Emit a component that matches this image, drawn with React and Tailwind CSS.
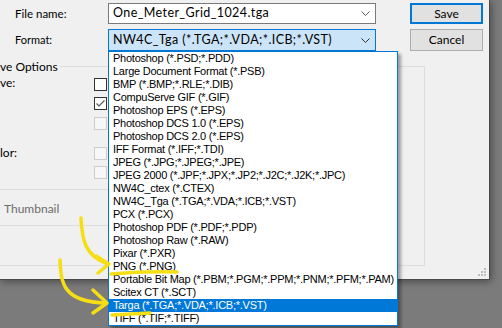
import React from 'react'

const formats = [
  'Photoshop (*.PSD;*.PDD)',
  'Large Document Format (*.PSB)',
  'BMP (*.BMP;*.RLE;*.DIB)',
  'CompuServe GIF (*.GIF)',
  'Photoshop EPS (*.EPS)',
  'Photoshop DCS 1.0 (*.EPS)',
  'Photoshop DCS 2.0 (*.EPS)',
  'IFF Format (*.IFF;*.TDI)',
  'JPEG (*.JPG;*.JPEG;*.JPE)',
  'JPEG 2000 (*.JPF;*.JPX;*.JP2;*.J2C;*.J2K;*.JPC)',
  'NW4C_ctex (*.CTEX)',
  'NW4C_Tga (*.TGA;*.VDA;*.ICB;*.VST)',
  'PCX (*.PCX)',
  'Photoshop PDF (*.PDF;*.PDP)',
  'Photoshop Raw (*.RAW)',
  'Pixar (*.PXR)',
  'PNG (*.PNG)',
  'Portable Bit Map (*.PBM;*.PGM;*.PPM;*.PNM;*.PFM;*.PAM)',
  'Scitex CT (*.SCT)',
  'Targa (*.TGA;*.VDA;*.ICB;*.VST)',
  'TIFF (*.TIF;*.TIFF)',
]

const Chevron = ({ color = '#555' }) => (
  <svg width="9" height="5" viewBox="0 0 9 5" className="shrink-0">
    <polyline points="0.5,0.5 4.5,4.5 8.5,0.5" fill="none" stroke={color} strokeWidth="1" />
  </svg>
)

const Check = ({ checked, disabled }) => (
  <div
    className={
      disabled
        ? 'w-[13px] h-[13px] border border-[#cccccc] bg-[#f7f7f7] shrink-0'
        : 'w-[13px] h-[13px] border border-[#333333] bg-white shrink-0 flex items-center justify-center'
    }
  >
    {checked && (
      <svg width="11" height="11" viewBox="0 0 11 11">
        <polyline points="1.5,5.5 4,8 9.5,2.5" fill="none" stroke="#5a5a5a" strokeWidth="1.2" />
      </svg>
    )}
  </div>
)

export default function App() {
  return (
    <div className="relative w-[502px] h-[328px] bg-[#7b7b7b] overflow-hidden">
      {/* dialog */}
      <div
        className="relative w-[490px] h-[280px] bg-[#f0f0f0] border-r border-b border-[#4a4a4a] shadow-[1px_1px_8px_rgba(0,0,0,0.45)] flex flex-col text-[12px] text-black"
        style={{ fontFamily: 'Lato, "Noto Sans", sans-serif' }}
      >
        {/* file name row */}
        <div className="flex items-center mt-[3px] h-[21px]">
          <span className="w-[108px] pl-[15px] text-[11.5px]">File name:</span>
          <div className="w-[268px] h-[21px] border border-[#7a7a7a] bg-white flex items-center pl-[4px] pr-[5px]">
            <span className="flex-1 text-[12.5px] tracking-[0.4px]">One_Meter_Grid_1024.tga</span>
            <Chevron color="#606060" />
          </div>
          <button className="ml-[34px] w-[73px] h-[21px] border-2 border-[#0078d7] bg-[#e1e1e1] flex items-center justify-center">
            Save
          </button>
        </div>

        {/* format row */}
        <div className="flex items-center mt-[5px] h-[22px]">
          <span className="w-[108px] pl-[15px] text-[11px]">Format:</span>
          <div className="w-[268px] h-[22px] border border-[#0078d7] bg-[#cce4f7] flex items-center pl-[4px] pr-[5px]">
            <span className="flex-1 text-[12.5px] tracking-[0.4px]">NW4C_Tga (*.TGA;*.VDA;*.ICB;*.VST)</span>
            <Chevron color="#333" />
          </div>
          <button className="ml-[34px] w-[73px] h-[22px] border border-[#adadad] bg-[#e1e1e1] flex items-center justify-center">
            Cancel
          </button>
        </div>

        {/* save options group */}
        <div className="mt-[15px] w-[425px] h-[200px] border-t border-r border-b border-[#dcdcdc] flex flex-col">
          <div className="-mt-[8px] flex">
            <span className="bg-[#f0f0f0] pr-[2px] leading-[15px]">ve Options</span>
          </div>

          <div className="flex mt-[4px] h-[13px]">
            <span className="w-[94px] -mt-[3px] leading-[15px]">ve:</span>
            <Check />
          </div>
          <div className="flex mt-[6px] pl-[94px]">
            <Check checked />
          </div>
          <div className="flex mt-[7px] pl-[94px]">
            <Check disabled />
          </div>

          <div className="flex mt-[17px] h-[13px]">
            <span className="w-[94px] -mt-[2px] leading-[15px]">lor:</span>
            <Check disabled />
          </div>
          <div className="flex mt-[6px] pl-[94px]">
            <Check disabled />
          </div>

          <div className="mt-[10px] w-[390px] h-px bg-[#dcdcdc]" />
          <span className="mt-[11px] pl-[4px] leading-[15px] text-[#6d6d6d]">Thumbnail</span>
          <div className="mt-[9px] w-[390px] h-px bg-[#dcdcdc]" />
        </div>

        {/* resize grip */}
        <svg width="9" height="9" viewBox="0 0 9 9" className="absolute right-[2px] bottom-[2px]">
          <rect x="6" y="0" width="2" height="2" fill="#bdbdbd" />
          <rect x="3" y="3" width="2" height="2" fill="#bdbdbd" />
          <rect x="6" y="3" width="2" height="2" fill="#bdbdbd" />
          <rect x="0" y="6" width="2" height="2" fill="#bdbdbd" />
          <rect x="3" y="6" width="2" height="2" fill="#bdbdbd" />
          <rect x="6" y="6" width="2" height="2" fill="#bdbdbd" />
        </svg>
      </div>

      {/* open dropdown list */}
      <div
        className="absolute left-[108px] top-[51px] w-[290px] h-[275px] border border-[#0078d7] bg-white shadow-[3px_3px_3px_rgba(0,0,0,0.35)] flex flex-col text-[11px] tracking-[-0.25px] text-black"
        style={{ fontFamily: '"Liberation Sans", Arial, sans-serif' }}
      >
        {formats.map((f) => (
          <div
            key={f}
            className={
              f.startsWith('Targa')
                ? 'h-[13px] leading-[13px] pl-[4px] bg-[#0078d7] text-white whitespace-nowrap'
                : 'h-[13px] leading-[13px] pl-[4px] whitespace-nowrap'
            }
          >
            {f}
          </div>
        ))}
      </div>

      {/* yellow annotations */}
      <svg width="502" height="328" className="absolute left-0 top-0 pointer-events-none">
        <g fill="none" stroke="#f5de14" strokeWidth="3.5" strokeLinecap="round" strokeLinejoin="round">
          <path d="M81 218 C82 238 84 256 108 264" />
          <path d="M96 256 L109 264 L98 273" />
          <path d="M111 274 Q145 271 177 272" />
          <path d="M60 260 C61 282 62 302 106 303" />
          <path d="M93 290 L107 303 L93 313" />
          <path d="M112 315 L150 313" />
        </g>
      </svg>
    </div>
  )
}
